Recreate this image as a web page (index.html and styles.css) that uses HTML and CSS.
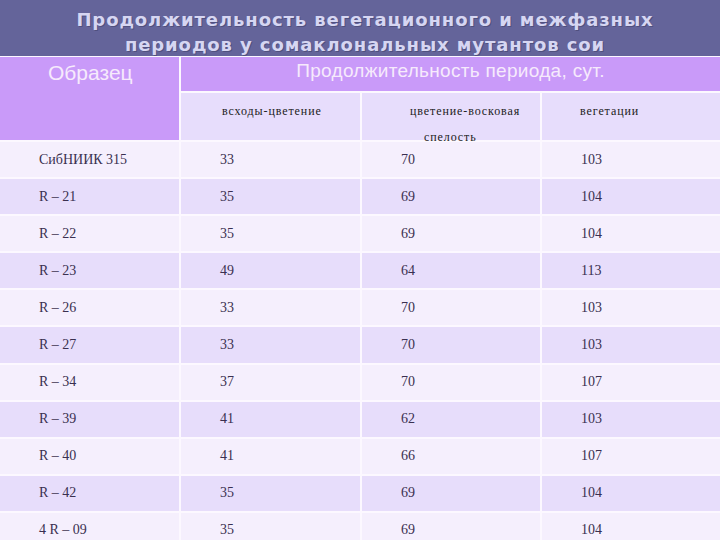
FILE: index.html
```html
<!DOCTYPE html>
<html lang="ru">
<head>
<meta charset="utf-8">
<link rel="stylesheet" href="styles.css">
</head>
<body>
<div class="title">
  <div class="title-line">Продолжительность вегетационного и межфазных</div>
  <div class="title-line">периодов у сомаклональных мутантов сои</div>
</div>
<div class="table">
  <div class="h-sample">Образец</div>
  <div class="h-period">Продолжительность периода, сут.</div>
  <div class="h-sub h-c2">всходы-цветение</div>
  <div class="h-sub h-c3"><span class="l1">цветение-восковая</span><span class="l2">спелость</span></div>
  <div class="h-sub h-c4">вегетации</div>

  <div class="c odd">СибНИИК 315</div><div class="c odd">33</div><div class="c odd">70</div><div class="c odd">103</div>
  <div class="c even">R – 21</div><div class="c even">35</div><div class="c even">69</div><div class="c even">104</div>
  <div class="c odd">R – 22</div><div class="c odd">35</div><div class="c odd">69</div><div class="c odd">104</div>
  <div class="c even">R – 23</div><div class="c even">49</div><div class="c even">64</div><div class="c even">113</div>
  <div class="c odd">R – 26</div><div class="c odd">33</div><div class="c odd">70</div><div class="c odd">103</div>
  <div class="c even">R – 27</div><div class="c even">33</div><div class="c even">70</div><div class="c even">103</div>
  <div class="c odd">R – 34</div><div class="c odd">37</div><div class="c odd">70</div><div class="c odd">107</div>
  <div class="c even">R – 39</div><div class="c even">41</div><div class="c even">62</div><div class="c even">103</div>
  <div class="c odd">R – 40</div><div class="c odd">41</div><div class="c odd">66</div><div class="c odd">107</div>
  <div class="c even">R – 42</div><div class="c even">35</div><div class="c even">69</div><div class="c even">104</div>
  <div class="c odd">4 R – 09</div><div class="c odd">35</div><div class="c odd">69</div><div class="c odd">104</div>
</div>
</body>
</html>
```
FILE: styles.css
```css
html, body {
  margin: 0;
  padding: 0;
  background: #fcf8ff;
  overflow: hidden;
  width: 720px;
  height: 540px;
}

.title {
  height: 56px;
  background: #64649a;
  display: flex;
  flex-direction: column;
  align-items: center;
  padding-top: 7px;
  box-sizing: border-box;
}

.title-line {
  font-family: "DejaVu Sans", Verdana, sans-serif;
  font-weight: bold;
  font-size: 18px;
  line-height: 25px;
  letter-spacing: 0.9px;
  color: #d6d6f2;
  text-shadow: 1px 1px 0 #50507e;
  padding-left: 10px;
}

.table {
  margin-top: 1px;
  display: grid;
  grid-template-columns: 179px 179px 178px 178px;
  grid-template-rows: 34px 47px;
  grid-auto-rows: 35.1px;
  gap: 2px;
}

.h-sample {
  grid-row: 1 / span 2;
  background: #c99af9;
  font-family: "Liberation Sans", Arial, sans-serif;
  font-size: 21px;
  color: #f6eafc;
  padding: 4px 0 0 48px;
}

.h-period {
  grid-column: 2 / span 3;
  background: #c99af9;
  font-family: "Liberation Sans", Arial, sans-serif;
  font-size: 19px;
  letter-spacing: 0.3px;
  color: #f6eafc;
  text-align: center;
  padding-top: 3px;
}

.h-sub {
  background: #e7ddfc;
  font-family: "Liberation Serif", "Times New Roman", serif;
  font-size: 12px;
  letter-spacing: 0.9px;
  color: #222;
  padding-top: 11px;
}

.h-c2 { padding-left: 41px; }
.h-c3 { padding-left: 48px; display: flex; flex-direction: column; gap: 11px; }
.h-c3 .l2 { padding-left: 14px; }
.h-c4 { padding-left: 38px; }

.c {
  font-family: "Liberation Serif", "Times New Roman", serif;
  font-size: 14px;
  color: #3a3050;
  padding-left: 39px;
  display: flex;
  align-items: center;
}

.odd { background: #f5effd; }
.even { background: #e7ddfb; }
```
